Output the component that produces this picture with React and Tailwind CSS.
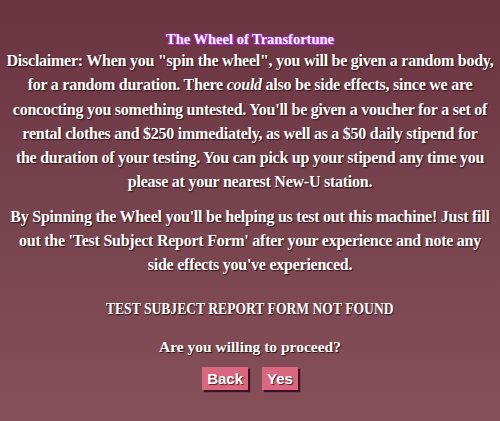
import React from 'react';

export default function App() {
  const shadow = '[text-shadow:1px_1px_1px_#2a1016]';
  return (
    <div className="min-h-[421px] w-full bg-[linear-gradient(180deg,#6a3440_0%,#74404b_40%,#855059_100%)] text-white font-['Liberation_Serif',serif] font-bold text-center">
      <div className="pt-[30px] px-[2px]">
        <h1 className="text-[14.5px] leading-[18px] [text-shadow:1px_1px_0_#c020ff,-1px_0_1px_#a020e0,0_0_2px_#d040ff]">
          The Wheel of Transfortune
        </h1>
        <p className={`mt-[1px] text-[16px] tracking-[-0.25px] leading-[24.3px] ${shadow}`}>
          Disclaimer: When you "spin the wheel", you will be given a random body,<br />
          for a random duration. There <i>could</i> also be side effects, since we are<br />
          concocting you something untested. You'll be given a voucher for a set of<br />
          rental clothes and $250 immediately, as well as a $50 daily stipend for<br />
          the duration of your testing. You can pick up your stipend any time you<br />
          please at your nearest New-U station.
        </p>
        <p className={`mt-[10px] text-[16px] tracking-[-0.25px] leading-[24.3px] ${shadow}`}>
          By Spinning the Wheel you'll be helping us test out this machine! Just fill<br />
          out the 'Test Subject Report Form' after your experience and note any<br />
          side effects you've experienced.
        </p>
        <p className={`mt-[21px] text-[17px] leading-[20px] ${shadow}`}>
          <span className="inline-block scale-x-[0.8]">TEST SUBJECT REPORT FORM NOT FOUND</span>
        </p>
        <p className={`mt-[17px] text-[15.5px] leading-[22px] ${shadow}`}>
          Are you willing to proceed?
        </p>
        <div className="mt-[9px] flex justify-center gap-[14px]">
          <button className="bg-[#d9677f] px-[5px] h-[23px] font-['Liberation_Sans',sans-serif] text-[15px] font-bold leading-[23px] shadow-[2px_2px_1px_#3a1420] [text-shadow:1px_1px_1px_#4a1a26]">
            Back
          </button>
          <button className="bg-[#d9677f] px-[5px] h-[23px] font-['Liberation_Sans',sans-serif] text-[15px] font-bold leading-[23px] shadow-[2px_2px_1px_#3a1420] [text-shadow:1px_1px_1px_#4a1a26]">
            Yes
          </button>
        </div>
      </div>
    </div>
  );
}
